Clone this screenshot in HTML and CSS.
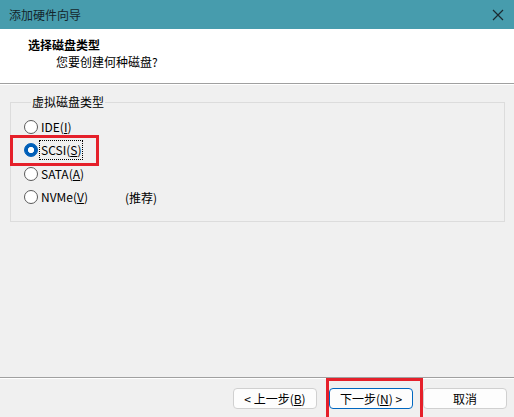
FILE: index.html
```html
<!DOCTYPE html>
<html lang="zh-CN">

<head>
    <meta charset="UTF-8">
    <meta name="viewport" content="width=device-width, initial-scale=1.0">
    <title>添加硬件向导</title>
    <link rel="stylesheet" href="styles.css">
</head>

<body>
    <div class="window">
        <div class="titlebar">
            <span class="title">添加硬件向导</span>
            <svg class="close" width="12" height="12" viewBox="0 0 12 12">
                <path d="M1 1 L11 11 M11 1 L1 11" stroke="#1b2a30" stroke-width="1.2" fill="none" />
            </svg>
        </div>

        <div class="header">
            <div class="head-title">选择磁盘类型</div>
            <div class="head-sub">您要创建何种磁盘?</div>
        </div>

        <div class="content">
            <fieldset class="group">
                <legend>虚拟磁盘类型</legend>
                <div class="radio-row">
                    <span class="radio"></span>
                    <span class="label">IDE(<u>I</u>)</span>
                </div>
                <div class="radio-row marked">
                    <span class="radio checked"></span>
                    <span class="label focus">SCSI(<u>S</u>)</span>
                    <span class="mark"></span>
                </div>
                <div class="radio-row">
                    <span class="radio"></span>
                    <span class="label">SATA(<u>A</u>)</span>
                </div>
                <div class="radio-row">
                    <span class="radio"></span>
                    <span class="label">NVMe(<u>V</u>)</span>
                    <span class="hint">(推荐)</span>
                </div>
            </fieldset>
        </div>

        <div class="footer">
            <button class="btn">&lt; 上一步(<u>B</u>)</button>
            <div class="next-wrap">
                <button class="btn primary">下一步(<u>N</u>) &gt;</button>
                <span class="mark"></span>
            </div>
            <button class="btn">取消</button>
        </div>
    </div>
</body>

</html>
```

FILE: styles.css
```css
html, body {
    margin: 0;
    padding: 0;
}

body {
    background-color: #f0f0f0;
    font-family: "Noto Sans CJK SC", "Noto Sans", sans-serif;
    font-size: 12px;
    color: #000;
}

.window {
    width: 514px;
    height: 417px;
    display: flex;
    flex-direction: column;
    overflow: hidden;
}

.titlebar {
    height: 29px;
    background-color: #479cad;
    display: flex;
    align-items: center;
    justify-content: space-between;
    padding: 0 10px 0 9px;
    flex-shrink: 0;
}

.title {
    color: #14262b;
    font-size: 12px;
}

.close {
    display: block;
}

.header {
    height: 55px;
    background-color: #fff;
    border-bottom: 1px solid #a0a0a0;
    box-shadow: 0 1px 0 #fff;
    padding: 7px 0 0 28px;
    box-sizing: border-box;
    flex-shrink: 0;
}

.head-title {
    font-weight: bold;
    line-height: 17px;
}

.head-sub {
    padding-left: 28px;
    line-height: 17px;
}

.content {
    flex: 1;
    padding: 11px 9px 0 10px;
}

.group {
    margin: 0;
    border: 1px solid #dcdcdc;
    padding: 6px 0 10px 13px;
    height: 127px;
    box-sizing: border-box;
}

.group legend {
    padding: 0 1px;
    margin-left: 7px;
    line-height: 14px;
}

.radio-row {
    position: relative;
    display: flex;
    align-items: center;
    height: 23.5px;
}

.radio {
    width: 12px;
    height: 12px;
    border: 1px solid #5a5a5a;
    border-radius: 50%;
    background: #fff;
    margin-right: 1px;
}

.radio.checked {
    border-color: #005fb8;
    background: radial-gradient(circle, #fff 0 2.8px, #005fb8 3.4px);
}

.label {
    padding: 1px 1px;
    border: 1px solid transparent;
    line-height: 16px;
}

.label.focus {
    border: 1px dotted #000;
}

.hint {
    margin-left: 35px;
}

.mark {
    position: absolute;
    border: 3px solid #e5202a;
    pointer-events: none;
}

.marked .mark {
    left: -14px;
    top: -4px;
    width: 83px;
    height: 25px;
}

.footer {
    height: 40px;
    border-top: 1px solid #a0a0a0;
    box-shadow: inset 0 1px 0 #fff;
    display: flex;
    justify-content: flex-end;
    align-items: flex-start;
    padding: 10px 7px 0 0;
    box-sizing: border-box;
    flex-shrink: 0;
}

.btn {
    width: 84px;
    height: 21px;
    font-family: "Noto Sans CJK SC", "Noto Sans", sans-serif;
    font-size: 12px;
    background-color: #fdfdfd;
    border: 1px solid #d0d0d0;
    border-radius: 4px;
    padding: 0;
    color: #000;
    line-height: 19px;
}

.btn.primary {
    border-color: #0067c0;
}

.next-wrap {
    position: relative;
    margin: 0 10px 0 12px;
}

.next-wrap .mark {
    left: -3px;
    top: -10px;
    width: 91px;
    height: 40px;
}
```
